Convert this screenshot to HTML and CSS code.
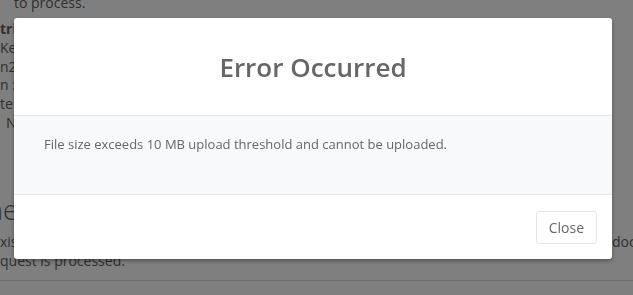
FILE: index.html
```html
<!DOCTYPE html>
<html>
<head>
<meta charset="utf-8">
<link rel="stylesheet" href="styles.css">
</head>
<body>
<div class="page">
  <div class="line top">to process.</div>
  <div class="group">
    <div class="line bold">tri</div>
    <div class="line">Key</div>
    <div class="line">n2</div>
    <div class="line">n :</div>
    <div class="line">te</div>
    <div class="line indent">No</div>
  </div>
  <div class="heading">ne</div>
  <div class="row"><span>xis</span><span>doc</span></div>
  <div class="line">quest is processed.</div>
  <hr class="rule">
</div>
<div class="backdrop">
  <div class="modal">
    <div class="modal-header"><h2 class="title">Error Occurred</h2></div>
    <div class="modal-body">File size exceeds 10 MB upload threshold and cannot be uploaded.</div>
    <div class="modal-footer"><button class="btn">Close</button></div>
  </div>
</div>
</body>
</html>
```
FILE: styles.css
```css
html, body { margin: 0; padding: 0; }
body {
  width: 633px;
  height: 295px;
  overflow: hidden;
  background: #fff;
  font-family: "Open Sans", sans-serif;
}
.page {
  color: #606060;
  font-size: 14px;
  overflow: hidden;
  height: 295px;
}
.line { height: 18.7px; line-height: 18.7px; white-space: nowrap; }
.top { margin-top: -6px; padding-left: 14px; }
.group { margin-top: 7.5px; }
.bold { font-weight: 700; }
.indent { padding-left: 6px; }
.heading { margin-top: 63px; font-size: 27px; font-weight: 300; line-height: 30px; margin-left: -13px; white-space: nowrap; }
.row { margin-top: 7.5px; display: grid; grid-template-columns: 612px 21px; height: 18.7px; line-height: 18.7px; white-space: nowrap; overflow: hidden; }
.rule { margin: 10px 0 0; border: 0; border-top: 1px solid #dcdcdc; }
.backdrop {
  position: fixed;
  inset: 0;
  background: rgba(0, 0, 0, 0.5);
  display: flex;
  align-items: flex-start;
  padding: 18px 0 0 14px;
}
.modal {
  width: 598px;
  background: #fff;
  border-radius: 3px;
  box-shadow: 0 2px 4px rgba(0, 0, 0, 0.35);
  display: flex;
  flex-direction: column;
  overflow: hidden;
}
.modal-header {
  height: 97px;
  display: flex;
  align-items: center;
  justify-content: center;
  border-bottom: 1px solid #e5e5e5;
}
.title {
  margin: 0;
  font-size: 26px;
  font-weight: 600;
  color: #666;
}
.modal-body {
  height: 79px;
  box-sizing: border-box;
  background: #f8f9fa;
  border-bottom: 1px solid #e5e5e5;
  padding: 19px 0 0 30px;
  line-height: 18px;
  font-size: 13px;
  color: #666;
}
.modal-footer {
  height: 64px;
  display: flex;
  align-items: center;
  justify-content: flex-end;
  padding-right: 15px;
}
.btn {
  height: 33px;
  padding: 0 12px;
  background: #fff;
  border: 1px solid #e3e6e9;
  border-radius: 3px;
  font-family: "Open Sans", sans-serif;
  font-size: 14px;
  color: #666;
}
```
